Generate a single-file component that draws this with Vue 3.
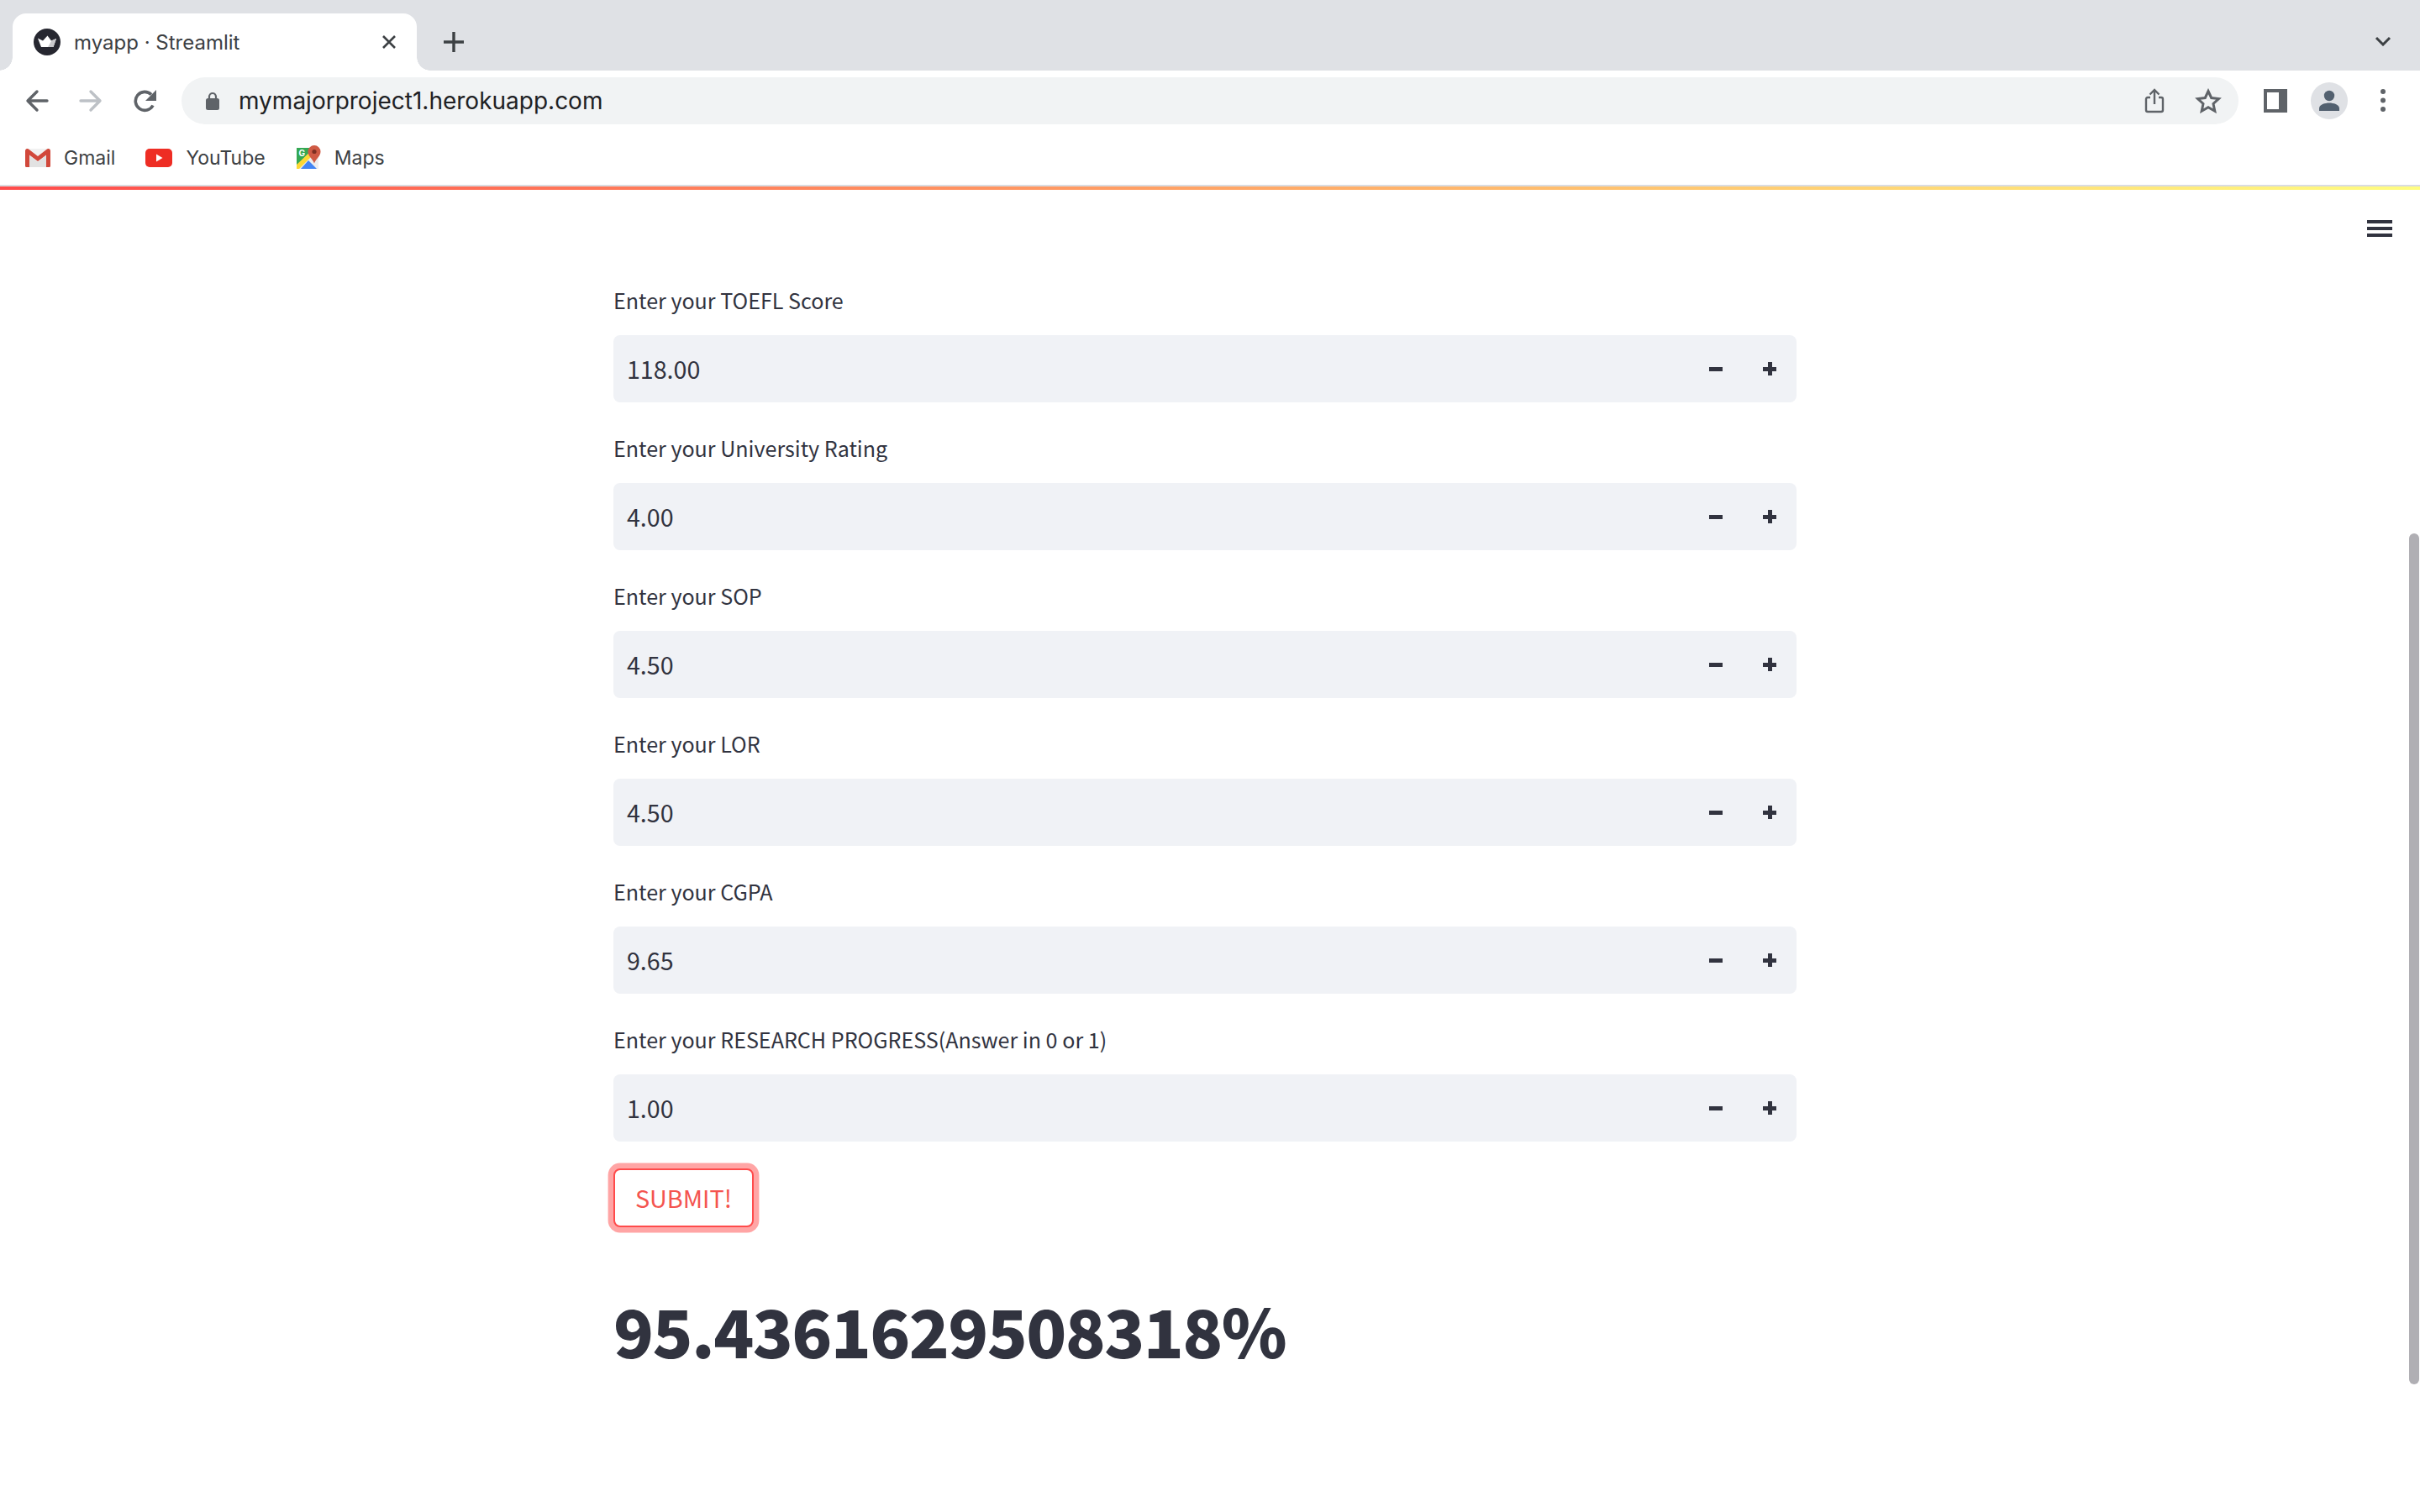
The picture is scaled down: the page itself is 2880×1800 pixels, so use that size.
<template>
  <div class="window">
    <div class="tabstrip">
      <div class="tab">
        <svg class="favicon" viewBox="0 0 32 32" width="32" height="32">
          <circle cx="16" cy="16" r="16" fill="#262730" />
          <path d="M5 11.500l6 3L16.500 8.500l4.500 6L27 12l-3.500 10H9z" fill="#fff" />
          <path d="M16.500 8.500l4.500 6L27 12l-3.500 10H17l4-7z" fill="#c9c9cc" />
        </svg>
        <span class="tab-title">myapp · Streamlit</span>
        <svg class="tab-close" viewBox="0 0 18 18" width="18" height="18">
          <path d="M2 2l14 14M16 2L2 16" stroke="#3c4043" stroke-width="2.600" fill="none" />
        </svg>
      </div>
      <svg class="new-tab" viewBox="0 0 26 26" width="26" height="26">
        <path d="M13 1v24M1 13h24" stroke="#3c4043" stroke-width="3.400" fill="none" />
      </svg>
      <svg class="tab-list" viewBox="0 0 20 12" width="20" height="12">
        <path d="M2 2l8 8 8-8" stroke="#3c4043" stroke-width="3" fill="none" />
      </svg>
    </div>

    <div class="toolbar">
      <button class="tool">
        <svg viewBox="0 0 28 28" width="28" height="28">
          <path d="M26 14H4M14 3L3 14l11 11" stroke="#5f6368" stroke-width="3.400" stroke-linecap="round" stroke-linejoin="round" fill="none" />
        </svg>
      </button>
      <button class="tool">
        <svg viewBox="0 0 28 28" width="28" height="28">
          <path d="M2 14h22M14 3l11 11-11 11" stroke="#bdc1c6" stroke-width="3.400" stroke-linecap="round" stroke-linejoin="round" fill="none" />
        </svg>
      </button>
      <button class="tool">
        <svg viewBox="0 0 28 28" width="28" height="28">
          <path d="M24 19.500A11 11 0 1 1 22 6.500" stroke="#5f6368" stroke-width="3.600" fill="none" />
          <path d="M28 1v13H15z" fill="#5f6368" />
        </svg>
      </button>
      <div class="omnibox">
        <svg class="lock" viewBox="0 0 18 22" width="18" height="22">
          <path d="M5 9V6a4 4 0 0 1 8 0v3" stroke="#5f6368" stroke-width="2.200" fill="none" />
          <rect x="1" y="8" width="16" height="14" rx="2.500" fill="#5f6368" />
        </svg>
        <span class="url">mymajorproject1.herokuapp.com</span>
        <button class="tool omni-tool">
          <svg viewBox="0 0 24 30" width="24" height="30">
            <path d="M7 11H4a2 2 0 0 0-2 2v13a2 2 0 0 0 2 2h16a2 2 0 0 0 2-2V13a2 2 0 0 0-2-2h-3" stroke="#5f6368" stroke-width="2.400" fill="none" />
            <path d="M12 19V2M6.500 7.500L12 2l5.500 5.500" stroke="#5f6368" stroke-width="2.400" fill="none" />
          </svg>
        </button>
        <button class="tool omni-tool">
          <svg viewBox="0 0 32 30" width="32" height="30">
            <path d="M16 3.500l3.700 8 8.800 1-6.500 6 1.800 8.700-7.800-4.400-7.800 4.400L10 18.500l-6.500-6 8.800-1z" stroke="#5f6368" stroke-width="3" fill="none" />
          </svg>
        </button>
      </div>
      <button class="tool side-tool">
        <svg viewBox="0 0 28 28" width="28" height="28">
          <rect width="28" height="28" fill="#5f6368" />
          <rect x="4" y="4" width="14" height="20" fill="#fff" />
        </svg>
      </button>
      <button class="tool">
        <svg viewBox="0 0 44 44" width="44" height="44">
          <circle cx="22" cy="22" r="22" fill="#dfe1e5" />
          <circle cx="22" cy="16" r="6.200" fill="#52606f" />
          <path d="M10 34v-3c0-4.500 7-6.500 12-6.500s12 2 12 6.500v3z" fill="#52606f" />
        </svg>
      </button>
      <button class="tool">
        <svg viewBox="0 0 6 28" width="6" height="28">
          <circle cx="3" cy="3" r="3" fill="#5f6368" />
          <circle cx="3" cy="13.500" r="3" fill="#5f6368" />
          <circle cx="3" cy="24" r="3" fill="#5f6368" />
        </svg>
      </button>
    </div>

    <div class="bookmarks">
      <div class="bookmark">
        <svg viewBox="0 0 30 22" width="30" height="22">
          <rect width="30" height="22" rx="1.500" fill="#f1f1f1" />
          <path d="M5 8l10 8 10-8v14H5z" fill="#e2e2e2" />
          <path d="M0 2.500A2.500 2.500 0 0 1 4 .500l11 8.500L26 .500a2.500 2.500 0 0 1 4 2V20.500A1.500 1.500 0 0 1 28.500 22H25V7.500L15 15 5 7.500V22H1.500A1.500 1.500 0 0 1 0 20.500z" fill="#d1483b" />
        </svg>
        <span>Gmail</span>
      </div>
      <div class="bookmark">
        <svg viewBox="0 0 32 22" width="32" height="22">
          <rect width="32" height="22" rx="5" fill="#ee2d24" />
          <path d="M13 6.500l7.500 4.500-7.500 4.500z" fill="#fff" />
        </svg>
        <span>YouTube</span>
      </div>
      <div class="bookmark">
        <svg viewBox="0 0 30 30" width="30" height="30">
          <path d="M1 3h26v25H1z" fill="#eeeeee" />
          <path d="M1 3h21L1 24z" fill="#34a853" />
          <path d="M1 23L19 6l3 4L4 28H1z" fill="#fdd835" />
          <path d="M6 28l9-10 10 10z" fill="#4285f4" />
          <path d="M22 0a7.500 7.500 0 0 1 7.500 7.500c0 5.500-5.500 8.500-7.500 14-2-5.500-7.500-8.500-7.500-14A7.500 7.500 0 0 1 22 0z" fill="#cf5a44" />
          <circle cx="22" cy="7.500" r="2.600" fill="#7d2f22" />
          <text x="3.500" y="13" class="maps-g">G</text>
        </svg>
        <span>Maps</span>
      </div>
    </div>

    <div class="decoration"></div>

    <main class="app">
      <div class="hamburger">
        <i></i><i></i><i></i>
      </div>

      <section class="column">
        <div v-for="field in fields" :key="field.label" class="field">
          <label class="field-label">{{ field.label }}</label>
          <div class="number-input">
            <span class="number-value">{{ field.value }}</span>
            <span class="step step-minus"></span>
            <span class="step step-plus"></span>
          </div>
        </div>

        <button class="submit">SUBMIT!</button>
        <h1 class="result">95.4361629508318%</h1>
      </section>

      <div class="scrollbar"></div>
    </main>
  </div>
</template>

<script setup>
const fields = [
  { label: 'Enter your TOEFL Score', value: '118.00' },
  { label: 'Enter your University Rating', value: '4.00' },
  { label: 'Enter your SOP', value: '4.50' },
  { label: 'Enter your LOR', value: '4.50' },
  { label: 'Enter your CGPA', value: '9.65' },
  { label: 'Enter your RESEARCH PROGRESS(Answer in 0 or 1)', value: '1.00' },
]
</script>

<style>
html,
body {
  margin: 0;
  background: #fff;
}
</style>

<style scoped>
.window {
  height: 1800px;
  overflow: hidden;
  display: flex;
  flex-direction: column;
  font-family: Inter, "Liberation Sans", sans-serif;
}

button {
  border: 0;
  padding: 0;
  background: none;
  font: inherit;
}

/* tab strip */
.tabstrip {
  height: 84px;
  flex: none;
  display: flex;
  align-items: flex-end;
  background: #dfe1e5;
}

.tab {
  position: relative;
  width: 481px;
  height: 68px;
  margin-left: 15px;
  display: flex;
  align-items: center;
  box-sizing: border-box;
  padding: 0 24px 0 25px;
  background: #fff;
  border-radius: 16px 16px 0 0;
}

.tab::before,
.tab::after {
  content: "";
  position: absolute;
  bottom: 0;
  width: 16px;
  height: 16px;
}

.tab::before {
  left: -16px;
  background: radial-gradient(circle at 0 0, #dfe1e5 15.500px, #fff 16px);
}

.tab::after {
  right: -16px;
  background: radial-gradient(circle at 100% 0, #dfe1e5 15.500px, #fff 16px);
}

.favicon {
  flex: none;
}

.tab-title {
  margin-left: 16px;
  font-size: 24px;
  color: #3c4043;
  white-space: nowrap;
}

.tab-close {
  margin-left: auto;
}

.new-tab {
  margin: 0 0 21px 31px;
}

.tab-list {
  margin: 0 34px 29px auto;
}

/* toolbar */
.toolbar {
  height: 64px;
  flex: none;
  display: flex;
  align-items: flex-start;
  box-sizing: border-box;
  padding: 8px 12px 0;
  background: #fff;
}

.tool {
  width: 64px;
  height: 56px;
  flex: none;
  display: flex;
  align-items: center;
  justify-content: center;
}

.omnibox {
  flex: 1;
  height: 56px;
  margin: 0 12px;
  display: flex;
  align-items: center;
  box-sizing: border-box;
  padding: 0 4px 0 28px;
  background: #f1f3f4;
  border-radius: 28px;
}

.lock {
  flex: none;
}

.url {
  margin-left: 22px;
  font-size: 28px;
  color: #202124;
  white-space: nowrap;
}

.omni-tool:first-of-type {
  margin-left: auto;
}

/* bookmarks */
.bookmarks {
  height: 74px;
  flex: none;
  display: flex;
  align-items: center;
  gap: 36px;
  box-sizing: border-box;
  padding: 8px 0 0 30px;
  border-bottom: 2px solid #dadce0;
  background: #fff;
}

.bookmark {
  display: flex;
  align-items: center;
  gap: 16px;
  font-size: 23px;
  color: #3c4043;
}

.maps-g {
  font-size: 10px;
  font-weight: 700;
  fill: #fff;
}

/* streamlit top line */
.decoration {
  height: 4px;
  flex: none;
  background: linear-gradient(90deg, rgb(255, 75, 75), rgb(255, 253, 128));
}

/* app */
.app {
  position: relative;
  flex: 1;
  display: flex;
  justify-content: center;
  box-sizing: border-box;
  padding: 112px 12px 0 0;
  background: #fff;
  color: #31333f;
  font-family: "Noto Sans CJK SC", "Open Sans", sans-serif;
}

.hamburger {
  position: absolute;
  top: 36px;
  right: 33px;
  width: 30px;
  display: flex;
  flex-direction: column;
  gap: 4px;
}

.hamburger i {
  height: 4px;
  background: #31333f;
}

.column {
  width: 1408px;
  display: flex;
  flex-direction: column;
  align-items: flex-start;
}

.field {
  width: 100%;
  margin-bottom: 35px;
}

.field-label {
  display: block;
  height: 40px;
  margin-bottom: 21px;
  font-size: 25.100px;
  line-height: 38px;
}

.number-input {
  height: 80px;
  display: flex;
  align-items: center;
  box-sizing: border-box;
  padding: 0 24px 0 16px;
  background: #f0f2f6;
  border-radius: 8px;
}

.number-value {
  font-size: 28.600px;
  line-height: 36px;
}

.step {
  position: relative;
  width: 16px;
  height: 16px;
}

.step::before,
.step-plus::after {
  content: "";
  position: absolute;
  background: #31333f;
}

.step::before {
  left: 0;
  right: 0;
  top: 6px;
  height: 5px;
}

.step-plus::after {
  top: 0;
  bottom: 0;
  left: 6px;
  width: 5px;
}

.step-minus {
  margin-left: auto;
}

.step-plus {
  margin-left: 48px;
}

.submit {
  margin-top: -3px;
  width: 167px;
  height: 70px;
  box-sizing: border-box;
  color: #f4544f;
  font-family: inherit;
  font-size: 28.800px;
  line-height: 38px;
  background: #fff;
  border: 2px solid #ff4b4b;
  border-radius: 8px;
  box-shadow: 0 0 0 6.400px rgba(255, 75, 75, 0.5);
}

.result {
  margin: 62px 0 0;
  font-size: 79px;
  font-weight: 900;
  letter-spacing: -1.600px;
  line-height: 120px;
  white-space: nowrap;
}

.scrollbar {
  position: absolute;
  top: 409px;
  right: 1px;
  width: 12px;
  height: 1013px;
  background: #b0afb4;
  border-radius: 6px;
}
</style>
